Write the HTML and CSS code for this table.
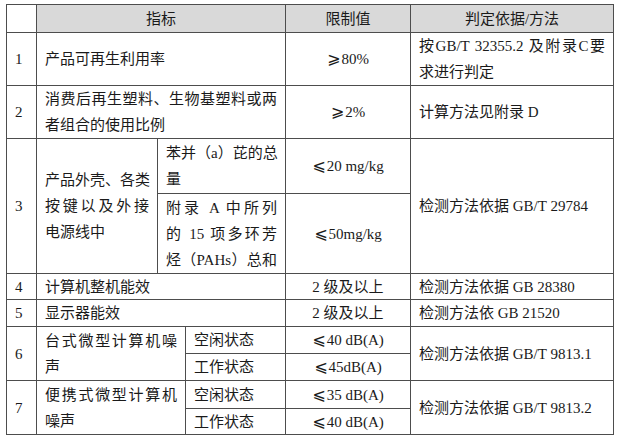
FILE: index.html
```html
<!DOCTYPE html>
<html lang="zh-CN">
<head>
<meta charset="utf-8">
<title>指标</title>
<link rel="stylesheet" href="styles.css">
</head>
<body>
<table class="spec">
  <colgroup>
    <col class="c-no">
    <col class="c-item">
    <col class="c-sub1">
    <col class="c-sub2">
    <col class="c-limit">
    <col class="c-method">
  </colgroup>
  <tr class="h-head">
    <td class="no blank"></td>
    <th colspan="3">指标</th>
    <th>限制值</th>
    <th>判定依据/方法</th>
  </tr>
  <tr class="h-r1">
    <td class="no">1</td>
    <td colspan="3" class="txt">产品可再生利用率</td>
    <td class="val"><span class="sym">⩾</span>80%</td>
    <td class="txt"><span class="jl">按GB/T 32355.2 及附录C要</span>求进行判定</td>
  </tr>
  <tr class="h-r2">
    <td class="no">2</td>
    <td colspan="3" class="txt"><span class="jl">消费后再生塑料、生物基塑料或两</span>者组合的使用比例</td>
    <td class="val"><span class="sym">⩾</span>2%</td>
    <td class="txt">计算方法见附录 D</td>
  </tr>
  <tr class="h-r3a">
    <td class="no" rowspan="2">3</td>
    <td class="txt" rowspan="2"><span class="jl">产品外壳、各类</span><span class="jl">按键以及外接</span>电源线中</td>
    <td class="txt" colspan="2"><span class="jl">苯并（a）芘的总</span>量</td>
    <td class="val"><span class="sym">⩽</span>20 mg/kg</td>
    <td class="txt" rowspan="2">检测方法依据 GB/T 29784</td>
  </tr>
  <tr class="h-r3b">
    <td class="txt" colspan="2"><span class="jl">附录 A 中所列</span><span class="jl">的 15 项多环芳</span><span class="jl">烃（PAHs）总和</span></td>
    <td class="val"><span class="sym">⩽</span>50mg/kg</td>
  </tr>
  <tr class="h-r4 short">
    <td class="no">4</td>
    <td colspan="3" class="txt">计算机整机能效</td>
    <td class="val">2 级及以上</td>
    <td class="txt">检测方法依据 GB 28380</td>
  </tr>
  <tr class="h-r5 short">
    <td class="no">5</td>
    <td colspan="3" class="txt">显示器能效</td>
    <td class="val">2 级及以上</td>
    <td class="txt">检测方法依 GB 21520</td>
  </tr>
  <tr class="h-r6a short">
    <td class="no" rowspan="2">6</td>
    <td class="txt multi" colspan="2" rowspan="2"><span class="jl">台式微型计算机噪</span>声</td>
    <td class="txt">空闲状态</td>
    <td class="val"><span class="sym">⩽</span>40 dB(A)</td>
    <td class="txt" rowspan="2">检测方法依据 GB/T 9813.1</td>
  </tr>
  <tr class="h-r6b short">
    <td class="txt">工作状态</td>
    <td class="val"><span class="sym">⩽</span>45dB(A)</td>
  </tr>
  <tr class="h-r7a short">
    <td class="no" rowspan="2">7</td>
    <td class="txt multi" colspan="2" rowspan="2"><span class="jl">便携式微型计算机</span>噪声</td>
    <td class="txt">空闲状态</td>
    <td class="val"><span class="sym">⩽</span>35 dB(A)</td>
    <td class="txt" rowspan="2">检测方法依据 GB/T 9813.2</td>
  </tr>
  <tr class="h-r7b short">
    <td class="txt">工作状态</td>
    <td class="val"><span class="sym">⩽</span>40 dB(A)</td>
  </tr>
</table>
</body>
</html>
```

FILE: styles.css
```css
html, body {
  margin: 0;
  padding: 0;
  background: #ffffff;
}

body {
  padding: 4px 0 0 6px;
  font-family: "Liberation Serif", "Noto Sans CJK SC", serif;
  font-size: 15px;
  color: #1a1a1a;
}

.spec {
  border-collapse: collapse;
  table-layout: fixed;
  width: 607px;
}

.c-no { width: 30px; }
.c-item { width: 121px; }
.c-sub1 { width: 28px; }
.c-sub2 { width: 100px; }
.c-limit { width: 125px; }
.c-method { width: 203px; }

.spec th,
.spec td {
  border: 1px solid #4d4d4d;
  padding: 0 8px;
  line-height: 26px;
  vertical-align: middle;
  font-weight: normal;
  overflow: hidden;
}

.spec th {
  background: #d9d9d9;
  text-align: center;
}

.spec .blank {
  background: #ffffff;
}

.spec .short td {
  line-height: 22px;
}

.spec .short td.multi {
  line-height: 26px;
}

.no {
  text-align: left;
}

.txt {
  text-align: left;
}

.val {
  text-align: center;
}

.jl {
  display: block;
  white-space: nowrap;
  text-align: justify;
  text-align-last: justify;
}

.sym {
  font-family: "DejaVu Sans", sans-serif;
  font-size: 16px;
  line-height: 1;
  margin-right: 1px;
}

.h-head { height: 28px; }
.h-r1 { height: 53px; }
.h-r2 { height: 52px; }
.h-r3a { height: 55px; }
.h-r3b { height: 80px; }
.h-r4 { height: 26px; }
.h-r5 { height: 27px; }
.h-r6a { height: 27px; }
.h-r6b { height: 27px; }
.h-r7a { height: 28px; }
.h-r7b { height: 26px; }
```
